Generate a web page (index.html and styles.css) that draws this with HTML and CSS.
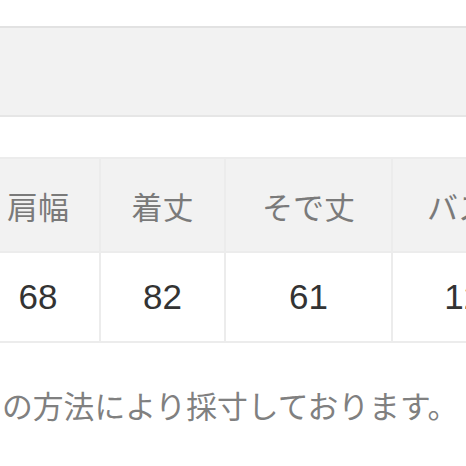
FILE: index.html
```html
<!DOCTYPE html>
<html lang="ja">
<head>
<meta charset="utf-8">
<link rel="stylesheet" href="styles.css">
</head>
<body>
<div class="page">
  <div class="band"></div>
  <div class="table-wrap">
    <table class="size-table">
      <colgroup>
        <col class="c1"><col class="c2"><col class="c3"><col class="c4">
      </colgroup>
      <thead>
        <tr><th>肩幅</th><th>着丈</th><th>そで丈</th><th>バスト</th></tr>
      </thead>
      <tbody>
        <tr><td>68</td><td>82</td><td>61</td><td>120</td></tr>
      </tbody>
    </table>
  </div>
  <p class="note">の方法により採寸しております。</p>
</div>
</body>
</html>
```
FILE: styles.css
```css
html, body {
  margin: 0;
  padding: 0;
  background: #ffffff;
  overflow: hidden;
}
.page {
  width: 466px;
  height: 466px;
  overflow: hidden;
  padding-top: 26px;
  box-sizing: border-box;
  font-family: "Noto Sans CJK JP", sans-serif;
}
.band {
  height: 87px;
  background: #f2f2f2;
  border-top: 2px solid #e2e2e2;
  border-bottom: 2px solid #e6e6e6;
  margin-bottom: 40px;
}
.table-wrap {
  width: 466px;
  overflow: hidden;
}
.size-table {
  margin-left: -25px;
  border-collapse: collapse;
  table-layout: fixed;
  width: 579px;
}
.c1 { width: 124px; }
.c2 { width: 125px; }
.c3 { width: 167px; }
.c4 { width: 163px; }
.size-table th,
.size-table td {
  padding: 0;
  text-align: center;
  border: 2px solid #ececec;
  white-space: nowrap;
}
.size-table th {
  height: 92px;
  background: #f2f2f2;
  color: #7a7a7a;
  font-weight: 400;
  font-size: 31px;
  line-height: 31px;
}
.size-table td {
  height: 86px;
  background: #ffffff;
  color: #333333;
  font-family: "Liberation Sans", Arial, sans-serif;
  font-size: 35px;
  line-height: 35px;
  padding-bottom: 2px;
}
.note {
  margin: 44px 0 0 2px;
  font-size: 30.8px;
  line-height: 36px;
  color: #808080;
  white-space: nowrap;
}
```
